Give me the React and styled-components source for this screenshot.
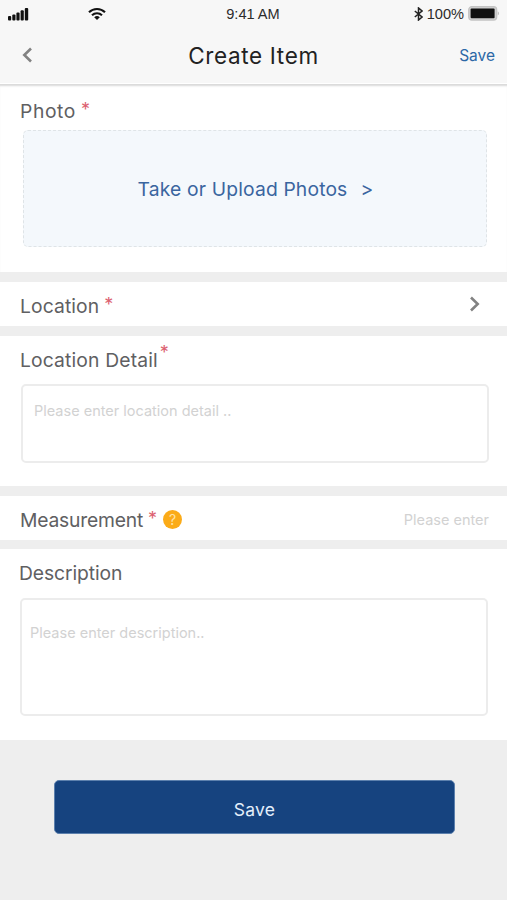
import React from 'react'
import styled, { createGlobalStyle } from 'styled-components';

const GlobalStyle = createGlobalStyle`
  * {
    box-sizing: border-box;
  }

  body {
    margin: 0;
    background-color: #eeeeee;
    font-family: Inter, "Liberation Sans", sans-serif;
  }

  button {
    border: 0;
    padding: 0;
    background: none;
    font-family: inherit;
    cursor: pointer;
  }
`;

const Screen = styled.div`
  display: flex;
  flex-direction: column;
  width: 507px;
  height: 900px;
  overflow: hidden;
  background-color: #eeeeee;
`;

const Header = styled.header`
  height: 84px;
  flex-shrink: 0;
  background-color: #f7f7f7;
  border-bottom: 1px solid #ffffff;
`;

const StatusBar = styled.div`
  display: grid;
  grid-template-columns: 1fr auto 1fr;
  align-items: center;
  height: 27px;
  padding: 0 7px;
  color: #2b2b2b;
  font-family: "Liberation Sans", sans-serif;
  font-size: 14.6px;
`;

const StatusGroup = styled.div`
  display: flex;
  align-items: center;
  justify-content: ${props => props.$end ? 'flex-end' : 'flex-start'};
  gap: ${props => props.$gap}px;
`;

const Clock = styled.div`
  margin-right: 1px;
`;

const NavBar = styled.div`
  display: grid;
  grid-template-columns: 1fr auto 1fr;
  align-items: center;
  height: 56px;
  padding: 0 12px 0 21px;
`;

const BackButton = styled.button`
  display: flex;
  justify-self: start;
`;

const Title = styled.h1`
  margin: 0 9px 0 0;
  padding-top: 2px;
  color: #222222;
  font-size: 22.5px;
  font-weight: 400;
  line-height: 30px;
  letter-spacing: 0.65px;
`;

const SaveLink = styled.button`
  justify-self: end;
  color: #2c68a6;
  font-size: 15.5px;
  line-height: 20px;
  padding-top: 2px;
`;

const Section = styled.section`
  height: ${props => props.$height}px;
  flex-shrink: 0;
  margin-bottom: ${props => props.$gap}px;
  padding: ${props => props.$padding};
  background-color: #ffffff;
  box-shadow: ${props => props.$shadow ? 'inset 0 3px 2px -1px #dadada' : 'none'};
`;

const Row = styled(Section)`
  display: flex;
  align-items: center;
  justify-content: space-between;
`;

const Label = styled.div`
  display: flex;
  align-items: center;
  color: #606062;
  font-size: 19.3px;
  line-height: 24px;
  letter-spacing: ${props => props.$spacing || 0}px;
`;

const Required = styled.span`
  align-self: flex-start;
  margin-left: ${props => props.$left}px;
  margin-top: ${props => props.$top || 0}px;
  color: #dc6170;
  font-size: 18px;
  line-height: 22px;
  letter-spacing: 0;
`;

const UploadBox = styled.button`
  display: flex;
  align-items: center;
  justify-content: center;
  gap: 13px;
  width: 464px;
  height: 117px;
  margin: 7px 0 0 3px;
  border: 1px dashed #dfe4e7;
  border-radius: 5px;
  background-color: #f4f8fc;
  color: #3a659f;
  font-size: 19.3px;
  line-height: 24px;
  letter-spacing: 0.15px;
  padding: 1px 0 0 1px;
`;

const TextBox = styled.div`
  height: ${props => props.$height}px;
  margin: ${props => props.$margin};
  padding: ${props => props.$padding};
  border: 2px solid #ececec;
  border-radius: 5px;
`;

const Placeholder = styled.div`
  color: #d2d2d2;
  font-size: 14.5px;
  line-height: 20px;
`;

const HelpBadge = styled.span`
  display: flex;
  align-items: center;
  justify-content: center;
  width: 19px;
  height: 19px;
  margin-left: 6px;
  border-radius: 50%;
  background-color: #fbab18;
  color: #ffe3a6;
  font-size: 14px;
  line-height: 19px;
  letter-spacing: 0;
`;

const RowArrow = styled.span`
  display: flex;
  padding-bottom: 4px;
`;

const Footer = styled.footer`
  padding: 40px 52px 0 54px;
`;

const SaveButton = styled.button`
  width: 401px;
  height: 54px;
  border: 1px solid #5c80ad;
  border-radius: 5px;
  background-color: #16437f;
  color: #e4effb;
  font-size: 17.5px;
  line-height: 24px;
  letter-spacing: 0.2px;
  padding-top: 5px;
`;

const SignalIcon = () => (
  <svg width="22" height="14" viewBox="0 0 22 14" fill="#111">
    <rect x="1" y="9" width="3.2" height="4.5" rx="1" />
    <rect x="5.3" y="7.5" width="3.2" height="6" rx="1" />
    <rect x="9.4" y="5.5" width="3.2" height="8" rx="1" />
    <rect x="13.6" y="3.2" width="3.2" height="10.3" rx="1" />
    <rect x="17.8" y="1" width="3.4" height="12.5" rx="1" />
  </svg>
);

const WifiIcon = () => (
  <svg width="18" height="14" viewBox="0 0 18 14" fill="none" stroke="#111" strokeWidth="2.1">
    <path d="M1 5.3C5.4 .9 12.6 .9 17 5.3" />
    <path d="M4 8.2C6.8 5.5 11.2 5.5 14 8.2" />
    <path d="M9 13L6.2 10.2Q9 7.8 11.8 10.2Z" fill="#111" stroke="none" />
  </svg>
);

const BluetoothIcon = () => (
  <svg width="9" height="14" viewBox="0 0 9 14" fill="none" stroke="#222" strokeWidth="1.5">
    <path d="M.8 4L8 10L4.5 13V1L8 4L.8 10" />
  </svg>
);

const BatteryIcon = () => (
  <svg width="32" height="15" viewBox="0 0 32 15">
    <rect x=".7" y=".7" width="28" height="13.4" rx="3" fill="#d0d0d0" stroke="#c4c4c4" strokeWidth="1.2" />
    <rect x="2.6" y="2.6" width="24" height="9.6" rx="1" fill="#111" />
    <path d="M29.8 5.2Q32 7.3 29.8 9.4Z" fill="#b5b5b5" />
  </svg>
);

const ChevronIcon = ({ back }) => (
  <svg width="12" height="16" viewBox="0 0 12 16" fill="none" stroke="#828282" strokeWidth="2.6">
    <path d={back ? 'M10 1.5L3.3 8L10 14.5' : 'M2 1.5L8.7 8L2 14.5'} />
  </svg>
);

const App = () => {
  return (
    <>
      <GlobalStyle />
      <Screen>
        <Header>
          <StatusBar>
            <StatusGroup $gap={59}>
              <SignalIcon />
              <WifiIcon />
            </StatusGroup>
            <Clock>9:41 AM</Clock>
            <StatusGroup $end $gap={4}>
              <BluetoothIcon />
              <span>100%</span>
              <BatteryIcon />
            </StatusGroup>
          </StatusBar>
          <NavBar>
            <BackButton><ChevronIcon back /></BackButton>
            <Title>Create Item</Title>
            <SaveLink>Save</SaveLink>
          </NavBar>
        </Header>

        <Section $height={188} $gap={10} $padding="15px 20px 0" $shadow>
          <Label $spacing={0.6}>Photo<Required $left={5}>*</Required></Label>
          <UploadBox>
            <span>Take or Upload Photos</span>
            <span>&gt;</span>
          </UploadBox>
        </Section>

        <Row $height={44} $gap={10} $padding="3px 26px 0 20px">
          <Label $spacing={0.1}>Location<Required $left={5}>*</Required></Label>
          <RowArrow><ChevronIcon /></RowArrow>
        </Row>

        <Section $height={150} $gap={10} $padding="12px 18px 0 20px">
          <Label $spacing={0.15}>Location Detail<Required $left={2} $top={-6}>*</Required></Label>
          <TextBox $height={79} $margin="12px 0 0 1px" $padding="15px 11px">
            <Placeholder>Please enter location detail ..</Placeholder>
          </TextBox>
        </Section>

        <Row $height={44} $gap={9} $padding="3px 18px 0 20px">
          <Label $spacing={-0.2}>
            Measurement<Required $left={5}>*</Required>
            <HelpBadge>?</HelpBadge>
          </Label>
          <Placeholder>Please enter</Placeholder>
        </Row>

        <Section $height={191} $gap={0} $padding="12px 19px 0 19px">
          <Label $spacing={-0.1}>Description</Label>
          <TextBox $height={118} $margin="13px 0 0 1px" $padding="23px 8px">
            <Placeholder>Please enter description..</Placeholder>
          </TextBox>
        </Section>

        <Footer>
          <SaveButton>Save</SaveButton>
        </Footer>
      </Screen>
    </>
  )
}

export default App
